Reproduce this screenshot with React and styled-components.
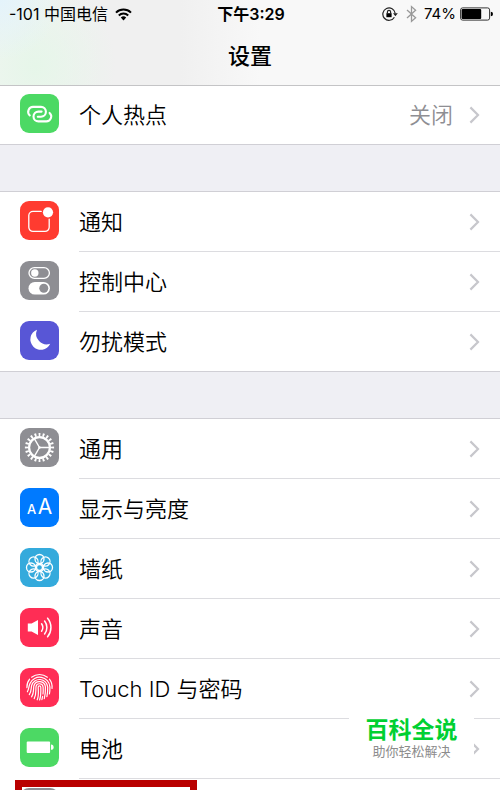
import React from 'react'
import styled, { createGlobalStyle } from 'styled-components'

const GlobalStyle = createGlobalStyle`
    *{
        box-sizing:border-box;
    }
    body{
        margin:0;
        background:#fff;
        color:#000;
        font-family:Inter, "Noto Sans CJK SC", sans-serif;
    }
`

const Screen = styled.div`
    position:relative;
    height:100vh;
    overflow:hidden;
`

const Header = styled.header`
    position:relative;
    z-index:1;
    height:86px;
    border-bottom:1px solid #c4c4c6;
    background:
        radial-gradient(circle at 0 0, #e4f3fb 0, rgba(228,243,251,0) 60px),
        radial-gradient(ellipse 80px 90px at 36px 66px, #e6f6e9 0, rgba(230,246,233,0) 100%),
        linear-gradient(90deg, #f1f5f2 0, #f0f0f0 100px, #f0f0f0 180px, #f8f8f8 260px);
`

const StatusBar = styled.div`
    display:grid;
    grid-template-columns:1fr auto 1fr;
    align-items:center;
    height:28px;
    padding:0 7px 0 9px;
    font-size:16px;
    line-height:28px;
    white-space:nowrap;
`

const StatusSide = styled.div`
    display:flex;
    align-items:center;
    justify-content:${props => props.$end ? 'flex-end' : 'flex-start'};
    gap:7px;
`

const Charge = styled.div`
    display:flex;
    align-items:center;
    gap:4px;
    font-size:15px;
`

const Time = styled.div`
    font-weight:600;
`

const Title = styled.h1`
    margin:0;
    font-size:22px;
    font-weight:500;
    line-height:56px;
    text-align:center;
`

const Main = styled.main`
    margin-top:-1px;
`

const Group = styled.ul`
    margin:0;
    padding:0;
    list-style:none;
`

const Gap = styled.div`
    height:48px;
    background:#efeff4;
    border-top:1px solid #d0cfd5;
    border-bottom:1px solid #d0cfd5;
`

const Row = styled.a`
    display:flex;
    align-items:flex-start;
    gap:20px;
    padding-left:20px;
    color:inherit;
    text-decoration:none;
`

const Tile = styled.span`
    flex:none;
    width:39px;
    height:39px;
    margin-top:9px;
    border-radius:9px;
    background:${props => props.$color};

    & svg{
        display:block;
    }
`

const RowBody = styled.span`
    flex:1;
    display:flex;
    align-items:center;
    gap:16px;
    height:${props => props.$last ? '59px' : '60px'};
    padding-right:20px;
    border-bottom:${props => props.$last ? 'none' : '1px solid #dcdce0'};
    font-size:22px;
    font-weight:350;
`

const Label = styled.span`
    flex:1;
    padding-bottom:4px;
`

const Value = styled.span`
    padding-bottom:4px;
    color:#8e8e93;
`

const Highlight = styled.div`
    position:absolute;
    top:780px;
    left:15px;
    width:182px;
    height:74px;
    border:7px solid #b90000;
`

const Badge = styled.div`
    position:absolute;
    top:713px;
    right:26px;
    width:125px;
    height:56px;
    background:#fff;
    text-align:center;
`

const BadgeTitle = styled.div`
    color:#00d032;
    font-size:23px;
    font-weight:700;
    line-height:34px;
`

const BadgeText = styled.div`
    color:#8c8c8c;
    font-size:13px;
    line-height:8px;
`

const Icon = ({ children }) => (
    <svg width="39" height="39" viewBox="0 0 39 39" fill="none" stroke="#fff" strokeLinecap="round" aria-hidden="true">
        {children}
    </svg>
)

const Hotspot = () => (
    <Icon>
        <g strokeWidth="2.1">
            <path d="M9.8 21.4A4.9 4.9 0 0 1 13.4 12.9H21A4.9 4.9 0 0 1 21 22.7H17.8" />
            <path d="M29.6 18.9A4.9 4.9 0 0 1 26 27.4H18.4A4.9 4.9 0 0 1 18.4 17.6H21.6" />
        </g>
    </Icon>
)

const Notifications = () => (
    <Icon>
        <path d="M21.2 10.4H13A4.2 4.2 0 0 0 8.8 14.6V26.2A4.2 4.2 0 0 0 13 30.4H25A4.2 4.2 0 0 0 29.2 26.2V18.2" strokeWidth="1.3" />
        <circle cx="28" cy="11.3" r="5.1" fill="#fff" stroke="none" />
    </Icon>
)

const ControlCenter = () => (
    <Icon>
        <rect x="9" y="6.6" width="20.4" height="10.8" rx="5.4" strokeWidth="1.3" />
        <circle cx="14.8" cy="12" r="3.7" fill="#fff" stroke="none" />
        <rect x="8.5" y="21" width="21.4" height="12.6" rx="6.3" fill="#fff" stroke="none" />
        <circle cx="23.8" cy="27.2" r="4.5" fill="#8e8e93" stroke="none" />
    </Icon>
)

const Moon = () => (
    <Icon>
        <path d="M17 8.7A10.4 10.4 0 1 0 30.2 22.8A10.6 10.6 0 0 1 17 8.7Z" fill="#fff" stroke="none" />
    </Icon>
)

const Gear = () => (
    <Icon>
        <circle cx="19.5" cy="19.5" r="10.4" strokeWidth="2.2" />
        <circle cx="19.5" cy="19.5" r="12.9" strokeWidth="3.4" strokeLinecap="butt" pathLength="40" strokeDasharray="0.9 1.1" strokeDashoffset="0.45" />
        <path d="M19.5 19.5H30M19.5 19.5L14.2 10.4M19.5 19.5L14.2 28.6" strokeWidth="1.4" />
        <circle cx="19.5" cy="19.5" r="1.2" fill="#fff" stroke="none" />
    </Icon>
)

const Display = () => (
    <Icon>
        <g fill="#fff" stroke="none" fontFamily="Inter, sans-serif" textAnchor="middle">
            <text x="11.5" y="25.5" fontSize="13" fontWeight="500">A</text>
            <text x="25" y="26" fontSize="21">A</text>
        </g>
    </Icon>
)

const Wallpaper = () => (
    <Icon>
        <g strokeWidth="1.3">
            {[0, 45, 90, 135, 180, 225, 270, 315].map(angle => (
                <circle key={angle} cx="19.5" cy="11" r="4.5" transform={`rotate(${angle} 19.5 19.5)`} />
            ))}
            <circle cx="19.5" cy="19.5" r="3" />
        </g>
    </Icon>
)

const Sound = () => (
    <Icon>
        <path d="M7.8 15.4H11.6L18 12V27L11.6 23.6H7.8Z" fill="#fff" stroke="none" />
        <g strokeWidth="1.5">
            <path d="M21.6 15.8A6.4 6.4 0 0 1 21.6 23.2" />
            <path d="M24.6 13A10.4 10.4 0 0 1 24.6 26" />
            <path d="M27.6 10.2A14.6 14.6 0 0 1 27.6 28.8" />
        </g>
    </Icon>
)

const Fingerprint = () => (
    <Icon>
        <g strokeWidth="1.2">
            <path d="M11.6 9.2A13 13 0 0 1 27.4 9.2" />
            <path d="M6.9 19.6A12.7 12.7 0 0 1 9.6 11.2M29.4 11.2A12.7 12.7 0 0 1 32 20.4" />
            <path d="M7.4 23.8C9 20.6 8.6 18.8 10 15.4A10.4 10.4 0 0 1 29.9 19C30 22 29.8 24 29.4 26" />
            <path d="M9.3 26.6C11.6 23.4 11 20.4 11.6 17.6A8.2 8.2 0 0 1 27.7 19C27.8 23 27.6 25.6 26.9 28.6" />
            <path d="M11.6 28.8C14 25.4 13.4 21.6 13.8 18A5.9 5.9 0 0 1 25.4 19C25.6 24 25.2 27.4 24.3 30.6" />
            <path d="M14.2 30.6C16.6 26.6 15.6 22.6 16 18.6A3.6 3.6 0 0 1 23.1 19C23.3 22 23.3 23.6 23 26M22.6 28.4L21.9 31.6" />
            <path d="M17.2 31.8C19 28 18.3 23 18.2 19.2A1.3 1.3 0 0 1 20.8 19.2C21 24 21 28 19.6 32" />
        </g>
    </Icon>
)

const Battery = () => (
    <Icon>
        <rect x="6.7" y="13.5" width="23.4" height="11.4" rx="1" fill="#fff" stroke="none" />
        <path d="M31 16.6A2.6 2.6 0 0 1 31 21.8Z" fill="#fff" stroke="none" />
    </Icon>
)

const Chevron = () => (
    <svg width="11" height="18" viewBox="0 0 11 18" fill="none" stroke="#c7c7cc" strokeWidth="2.2" aria-hidden="true">
        <path d="M1.4 1.4L9 9L1.4 16.6" />
    </svg>
)

const Wifi = () => (
    <svg width="17" height="13" viewBox="0 0 17 13" fill="none" stroke="#000" strokeWidth="2" aria-hidden="true">
        <path d="M1 4.6A10.8 10.8 0 0 1 16 4.6" />
        <path d="M3.8 7.5A6.8 6.8 0 0 1 13.2 7.5" />
        <path d="M8.5 12.4L5.8 9.6A4 4 0 0 1 11.2 9.6Z" fill="#000" stroke="none" />
    </svg>
)

const RotationLock = () => (
    <svg width="17" height="14" viewBox="0 0 17 14" fill="none" stroke="#222" strokeWidth="1.2" aria-hidden="true">
        <path d="M12.4 10.2A6.2 6.2 0 1 1 13.2 6.4" />
        <path d="M11 6.2H15.8L13.4 9.2Z" fill="#222" stroke="none" />
        <rect x="4.4" y="6.2" width="5.2" height="4" fill="#000" stroke="none" />
        <path d="M5.4 6.4V5A1.6 1.6 0 0 1 8.6 5V6.4" />
    </svg>
)

const Bluetooth = () => (
    <svg width="11" height="18" viewBox="0 0 11 18" fill="none" stroke="#999" strokeWidth="1.3" aria-hidden="true">
        <path d="M1 5L9.6 12.8L5.5 16.4V1.6L9.6 5.2L1 13" />
    </svg>
)

const BatteryLevel = () => (
    <svg width="33" height="14" viewBox="0 0 33 14" aria-hidden="true">
        <rect x="0.6" y="0.9" width="29" height="12.2" rx="2" fill="none" stroke="#333" strokeWidth="1" />
        <rect x="1.6" y="1.9" width="19.6" height="10.2" rx="1" fill="#000" />
        <path d="M30.8 4.8A2.2 2.2 0 0 1 30.8 9.2Z" fill="#000" />
    </svg>
)

const groups = [
    [
        { label: '个人热点', value: '关闭', color: '#4cd964', icon: Hotspot },
    ],
    [
        { label: '通知', color: '#ff3b30', icon: Notifications },
        { label: '控制中心', color: '#8e8e93', icon: ControlCenter },
        { label: '勿扰模式', color: '#5856d6', icon: Moon },
    ],
    [
        { label: '通用', color: '#8e8e93', icon: Gear },
        { label: '显示与亮度', color: '#007aff', icon: Display },
        { label: '墙纸', color: '#34aadc', icon: Wallpaper },
        { label: '声音', color: '#ff2d55', icon: Sound },
        { label: 'Touch ID 与密码', color: '#ff2d55', icon: Fingerprint },
        { label: '电池', color: '#4cd964', icon: Battery },
        { label: '', color: '#8e8e93' },
    ],
]

const SettingsRow = ({ item, last }) => {
    const Glyph = item.icon

    return (
        <li>
            <Row href="#">
                <Tile $color={item.color}>{Glyph && <Glyph />}</Tile>
                <RowBody $last={last}>
                    <Label>{item.label}</Label>
                    {item.value && <Value>{item.value}</Value>}
                    <Chevron />
                </RowBody>
            </Row>
        </li>
    )
}

const App = () => {
    return (
        <Screen>
            <GlobalStyle />
            <Header>
                <StatusBar>
                    <StatusSide>
                        <span>-101 中国电信</span>
                        <Wifi />
                    </StatusSide>
                    <Time>下午3:29</Time>
                    <StatusSide $end>
                        <RotationLock />
                        <Bluetooth />
                        <Charge>
                            <span>74%</span>
                            <BatteryLevel />
                        </Charge>
                    </StatusSide>
                </StatusBar>
                <Title>设置</Title>
            </Header>

            <Main>
                {groups.map((group, i) => (
                    <React.Fragment key={i}>
                        {i > 0 && <Gap />}
                        <Group>
                            {group.map((item, j) => (
                                <SettingsRow key={j} item={item} last={j === group.length - 1} />
                            ))}
                        </Group>
                    </React.Fragment>
                ))}
            </Main>

            <Highlight />
            <Badge>
                <BadgeTitle>百科全说</BadgeTitle>
                <BadgeText>助你轻松解决</BadgeText>
            </Badge>
        </Screen>
    )
}

export default App
